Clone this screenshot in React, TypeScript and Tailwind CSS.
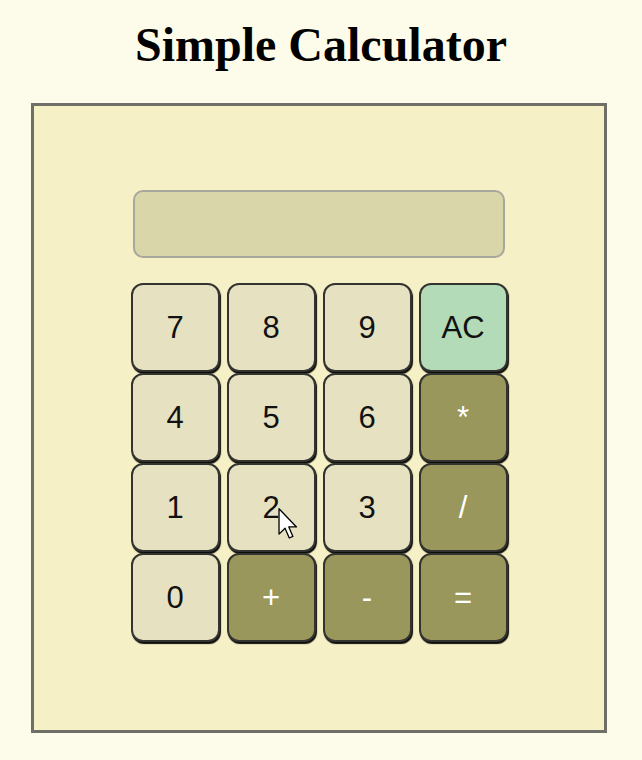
import React from "react";

type Key = { label: string; kind: "num" | "op" | "ac" };

const keys: Key[] = [
  { label: "7", kind: "num" },
  { label: "8", kind: "num" },
  { label: "9", kind: "num" },
  { label: "AC", kind: "ac" },
  { label: "4", kind: "num" },
  { label: "5", kind: "num" },
  { label: "6", kind: "num" },
  { label: "*", kind: "op" },
  { label: "1", kind: "num" },
  { label: "2", kind: "num" },
  { label: "3", kind: "num" },
  { label: "/", kind: "op" },
  { label: "0", kind: "num" },
  { label: "+", kind: "op" },
  { label: "-", kind: "op" },
  { label: "=", kind: "op" },
];

function KeyButton({ k }: { k: Key }) {
  const base =
    "relative h-[89px] w-[89px] rounded-[12px] border-2 border-[#333330] shadow-[1px_2px_1px_rgba(0,0,0,0.95)] flex items-center justify-center text-[31px] leading-none font-['Liberation_Sans',Arial,sans-serif]";
  const color =
    k.kind === "num"
      ? "bg-[#e6e1c1] text-[#111]"
      : k.kind === "ac"
      ? "bg-[#b3dbb7] text-[#111]"
      : "bg-[#9a975c] text-white";
  return (
    <div className={`${base} ${color}`}>
      <span>{k.label}</span>
      {k.label === "2" && (
        <svg
          className="absolute left-[49px] top-[43px]"
          width="20"
          height="31"
          viewBox="0 0 12 19"
        >
          <path
            d="M0.5 0.5 L0.5 16 L4.2 12.4 L6.8 18.4 L9 17.4 L6.5 11.6 L11.2 11.6 Z"
            fill="#fff"
            stroke="#000"
            strokeWidth="0.8"
            strokeLinejoin="round"
          />
        </svg>
      )}
    </div>
  );
}

export default function App() {
  return (
    <div className="min-h-[760px] w-full bg-[#fdfcea] pt-[18px] font-['Liberation_Serif','Times_New_Roman',serif]">
      <h1 className="text-center text-[48px] font-bold leading-[53px] text-black">
        Simple Calculator
      </h1>
      <div className="ml-[31px] mt-[32px] flex h-[630px] w-[576px] flex-col items-center border-[3px] border-[#6f6f68] bg-[#f5f0c6] pt-[84px]">
        <div className="h-[68px] w-[372px] rounded-[10px] border-2 border-[#a8a79c] bg-[#d9d6a9]" />
        <div className="mt-[25px] grid grid-cols-[repeat(4,89px)] gap-x-[7px] gap-y-[1px]">
          {keys.map((k) => (
            <KeyButton key={k.label} k={k} />
          ))}
        </div>
      </div>
    </div>
  );
}
